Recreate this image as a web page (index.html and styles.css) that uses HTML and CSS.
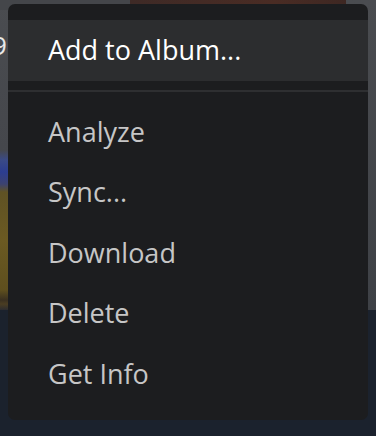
FILE: index.html
```html
<!DOCTYPE html>
<html lang="en">
<head>
    <meta charset="UTF-8">
    <meta name="viewport" content="width=device-width, initial-scale=1.0">
    <title>Menu</title>
    <link rel="stylesheet" href="styles.css">
</head>
<body>
    <div class="fondo">
        <div class="mosaico mosaico-izq"><span class="numero">9</span></div>
        <div class="mosaico mosaico-gris"></div>
        <div class="mosaico mosaico-arriba"></div>
        <div class="mosaico mosaico-der"></div>
    </div>
    <ul class="menu">
        <li class="item activo">Add to Album...</li>
        <li class="separador"></li>
        <li class="item">Analyze</li>
        <li class="item">Sync...</li>
        <li class="item">Download</li>
        <li class="item">Delete</li>
        <li class="item">Get Info</li>
    </ul>
</body>
</html>
```

FILE: styles.css
```css
body {
    margin: 0;
    padding: 4px 8px 16px;
    width: 360px;
    height: 416px;
    background-color: #1b222d;
    font-family: "Open Sans", "Noto Sans", sans-serif;
    position: relative;
    overflow: hidden;
}

/* Miniaturas de fondo detras del menu */
.fondo {
    position: absolute;
    inset: 0;
}

.mosaico {
    position: absolute;
}

.mosaico-izq {
    left: 0;
    top: 0;
    width: 40px;
    height: 310px;
    background: linear-gradient(to bottom,
        #4a4c50 0, #45474c 150px, #3a4a86 160px, #2c3d90 172px, #3c4270 184px,
        #5f5224 192px, #6b5a22 240px, #5e4f1e 290px, #3a3020 300px, #4a3d22 304px, #2c2c30 310px);
}

.numero {
    position: absolute;
    left: -8px;
    top: 27px;
    font-size: 26px;
    color: #e8e8e8;
}

.mosaico-gris {
    left: 0;
    top: 0;
    width: 130px;
    height: 10px;
    background-color: #44464a;
}

.mosaico-arriba {
    left: 130px;
    top: 0;
    width: 240px;
    height: 10px;
    background: linear-gradient(to right, #3e2a26, #4a2c24 60%, #3a2622);
}

.mosaico-der {
    right: 0;
    top: 0;
    width: 30px;
    height: 310px;
    background: linear-gradient(to bottom, #4a4c50, #3e4146);
}

.menu {
    position: relative;
    list-style: none;
    margin: 0;
    padding: 16px 0 0;
    height: 416px;
    box-sizing: border-box;
    background-color: #1c1d1f;
    border-radius: 7px;
}

.item {
    height: 60.5px;
    padding-left: 40px;
    padding-bottom: 2px;
    box-sizing: border-box;
    display: flex;
    align-items: center;
    font-size: 27px;
    font-weight: 500;
    color: #c6c6c6;
}

.item.activo {
    height: 61px;
    background-color: #2c2d2f;
    color: #ffffff;
}

.separador {
    height: 2px;
    margin: 9px 0 10px;
    background-color: #2e2f31;
}
```
